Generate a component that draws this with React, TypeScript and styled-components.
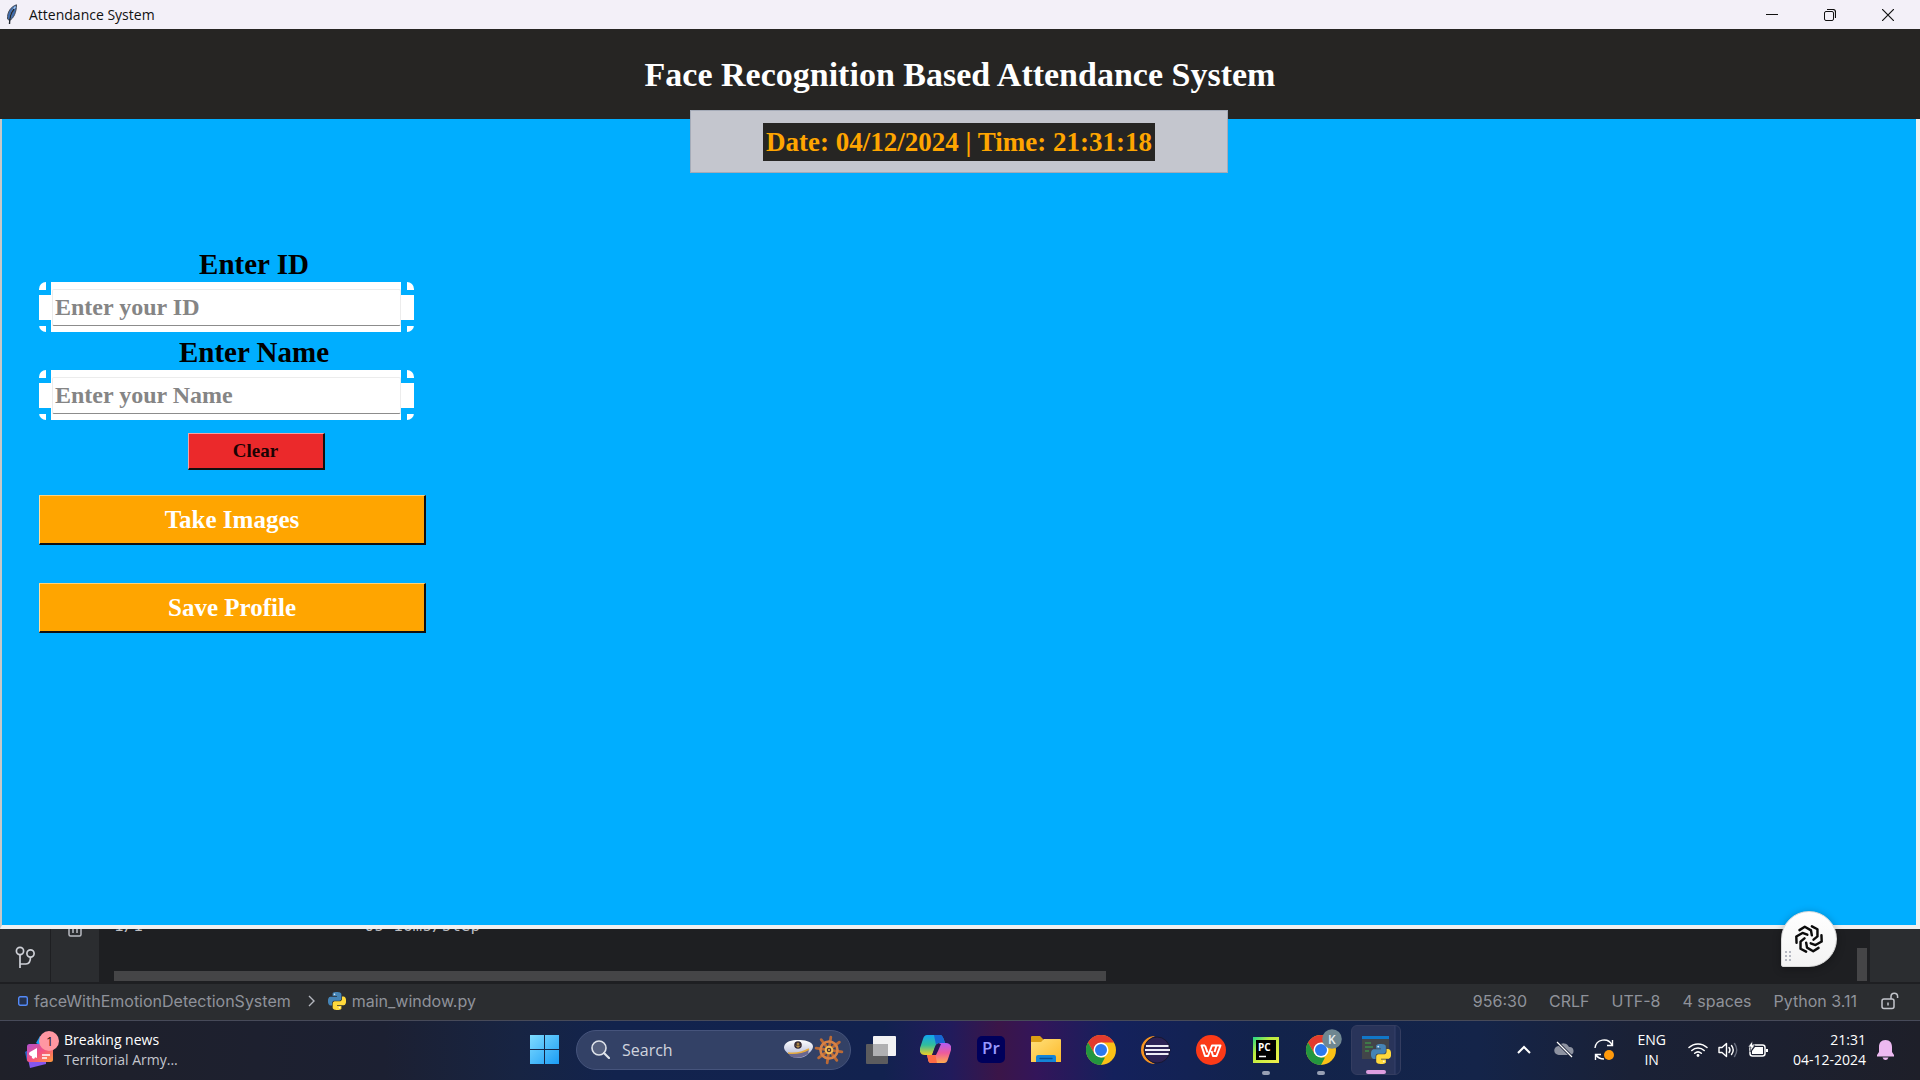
import React from "react";
import styled, { createGlobalStyle, css } from "styled-components";

const serif = '"Liberation Serif", "Times New Roman", serif';
const ui = '"Open Sans", "Noto Sans", sans-serif';
const ide = 'Inter, "Noto Sans", sans-serif';

const GlobalStyle = createGlobalStyle`
  * { box-sizing: border-box; }
  body { margin: 0; background: #1e1f22; }
  button { font: inherit; color: inherit; cursor: pointer; }
`;

const Screen = styled.div`
  min-height: 100vh;
  display: flex;
  flex-direction: column;
  position: relative;
  overflow: hidden;
`;

/* ---------- application window ---------- */

const AppWindow = styled.main`
  flex: 1;
  display: flex;
  flex-direction: column;
`;

const TitleBar = styled.header`
  height: 29px;
  display: flex;
  align-items: center;
  padding-left: 6px;
  gap: 11px;
  background: #f3f0f8;
  color: #111;
  font: 14px/29px ${ui};
`;

const WindowControls = styled.div`
  display: flex;
  margin-left: auto;
  padding-right: 3px;
`;

const WindowControl = styled.button`
  width: 58px;
  height: 29px;
  display: flex;
  align-items: center;
  justify-content: center;
  padding: 0;
  border: 0;
  background: transparent;
`;

const Heading = styled.h1`
  margin: 0;
  height: 90px;
  padding-top: 2px;
  display: flex;
  align-items: center;
  justify-content: center;
  background: #262523;
  color: #fff;
  font: bold 34px/40px ${serif};
`;

const Canvas = styled.section`
  flex: 1;
  background: #00aeff;
  border: solid #f0f0f0;
  border-width: 0 4px 4px 2px;
  border-left-color: #c8c8c8;
`;

const ClockPanel = styled.div`
  width: 538px;
  height: 63px;
  margin: -9px auto 0;
  display: flex;
  align-items: center;
  justify-content: center;
  background: #c4c6ce;
  border: 1px solid #a5abb8;
  position: relative;
`;

const Clock = styled.time`
  padding: 0 3px;
  background: #262523;
  color: #ffa500;
  font: bold 27px/38px ${serif};
`;

const Form = styled.form`
  width: 434px;
  margin: 71px 0 0 37px;
  display: flex;
  flex-direction: column;
  align-items: flex-start;
`;

const FieldLabel = styled.label`
  align-self: stretch;
  padding: 3px 4px 0 0;
  text-align: center;
  color: #000;
  font: bold 29px/35px ${serif};
`;

const paint = "linear-gradient(#fff, #fff)";

const FieldFrame = styled.div`
  width: 375px;
  height: 50px;
  padding: 7px 13px 5px;
  border-radius: 7px;
  background:
    ${paint} 12px 0 / 350px 50px,
    ${paint} 0 13px / 375px 25px,
    ${paint} 0 0 / 7px 8px,
    ${paint} 0 100% / 7px 6px,
    ${paint} 100% 0 / 7px 8px,
    ${paint} 100% 100% / 7px 6px;
  background-repeat: no-repeat;
`;

const Field = styled.input`
  display: block;
  width: 100%;
  height: 37px;
  padding: 0 2px;
  border: 1px solid #ececec;
  border-bottom: 1px solid #8c8c8c;
  border-radius: 2px;
  outline: 0;
  background: #fff;
  font: bold 24px/34px ${serif};
  &::placeholder { color: #858585; opacity: 1; }
`;

const RaisedButton = styled.button<{ $danger?: boolean }>`
  border: 2px solid #101010;
  border-top: 1px solid #ffd27a;
  border-left: 1px solid #ffe0a0;
  padding: 0;
  ${({ $danger }) =>
    $danger
      ? css`
          width: 137px;
          height: 37px;
          margin-top: 13px;
          align-self: center;
          background: #eb292b;
          border-top-color: #f6a3a4;
          border-left-color: #f6a3a4;
          color: #1a0303;
          font: bold 19px/30px ${serif};
        `
      : css`
          width: 387px;
          height: 50px;
          background: #ffa500;
          color: #fff;
          font: bold 25px/44px ${serif};
        `}
`;

const Actions = styled.div`
  display: flex;
  flex-direction: column;
  gap: 38px;
  margin-top: 25px;
`;

/* ---------- editor behind the window ---------- */

const Editor = styled.section`
  height: 55px;
  display: flex;
  padding-bottom: 2px;
  background: #1e1f22;
`;

const Rail = styled.div<{ $narrow?: boolean }>`
  width: ${({ $narrow }) => ($narrow ? "48px" : "50px")};
  margin-left: ${({ $narrow }) => ($narrow ? "1px" : "0")};
  flex: none;
  display: flex;
  justify-content: center;
  background: #2b2d30;
`;

const Console = styled.div`
  flex: 1;
  min-width: 0;
  padding: 0 3px 1px 15px;
  display: flex;
  justify-content: space-between;
  align-items: flex-end;
  overflow: hidden;
`;

const ConsoleBody = styled.div`
  width: calc(57% - 7px);
  height: 100%;
  display: flex;
  flex-direction: column;
  justify-content: space-between;
`;

const Output = styled.pre`
  margin: -13px 0 0;
  color: #bcbec4;
  font: 16px/20px "DejaVu Sans Mono", monospace;
`;

const Thumb = styled.div<{ $vertical?: boolean }>`
  background: #454547;
  width: ${({ $vertical }) => ($vertical ? "10px" : "100%")};
  height: ${({ $vertical }) => ($vertical ? "33px" : "10px")};
`;

const StatusBar = styled.footer`
  height: 36px;
  display: flex;
  align-items: center;
  padding: 0 21px 3px 18px;
  background: #2b2d30;
  color: #8f929a;
  font: 16px/24px ${ide};
`;

const Crumb = styled.span`
  display: flex;
  align-items: center;
  gap: 6px;
`;

const CrumbMark = styled.span`
  display: flex;
  margin: 0 13px 0 17px;
`;

const StatusItems = styled.div`
  margin-left: auto;
  display: flex;
  align-items: center;
  gap: 22px;
`;

const LockSlot = styled.span`
  display: flex;
  padding-left: 2px;
`;

const FloatingButton = styled.button`
  position: absolute;
  right: 83px;
  bottom: 113px;
  width: 56px;
  height: 56px;
  padding: 0;
  display: flex;
  align-items: center;
  justify-content: center;
  border: 1px solid #d9d9d9;
  border-radius: 28px 28px 28px 2px;
  background: linear-gradient(#fff, #f3f3f3);
  box-shadow: 0 2px 8px rgba(0, 0, 0, 0.3);
`;

const Grip = styled.svg`
  position: absolute;
  left: 3px;
  bottom: 4px;
`;

/* ---------- taskbar ---------- */

const Taskbar = styled.nav`
  height: 60px;
  display: grid;
  grid-template-columns: 1fr auto 1fr;
  align-items: center;
  padding-bottom: 2px;
  border-top: 1px solid #474a59;
  color: #fff;
  font: 14px/20px ${ui};
  background: linear-gradient(
    90deg,
    #1f2029 0%, #1c2032 20%, #172443 27%, #12234d 32%, #12224f 46%,
    #211b5c 49.5%, #3b1548 52%, #33155a 54%, #14215c 58%, #12234b 66%,
    #142449 77%, #1a2136 85%, #1e1f29 100%
  );
`;

const Widgets = styled.button`
  justify-self: start;
  display: flex;
  align-items: center;
  gap: 5px;
  margin-left: 24px;
  padding: 0;
  border: 0;
  background: transparent;
  text-align: left;
`;

const Muted = styled.span`
  display: block;
  color: #c4c6cd;
`;

const Apps = styled.div`
  display: flex;
  align-items: center;
`;

const AppButton = styled.button<{ $active?: boolean; $state?: "open" | "focused" }>`
  width: 55px;
  height: 57px;
  padding: 0;
  border: 0;
  background: transparent;
  display: flex;
  align-items: center;
  justify-content: center;
  position: relative;
  ${({ $active }) =>
    $active &&
    css`
      width: 50px;
      height: 50px;
      border: 1px solid #343d60;
      border-radius: 6px;
      background: linear-gradient(90deg, #29345a 42px, #35406a 43px, #1d2b52 44px);
      margin-left: 3px;
      margin-right: 2px;
    `}
  ${({ $state }) =>
    $state &&
    css`
      &::after {
        content: "";
        position: absolute;
        bottom: ${$state === "focused" ? "0" : "3px"};
        left: ${$state === "focused" ? "14px" : "24px"};
        width: ${$state === "focused" ? "20px" : "8px"};
        height: 4px;
        border-radius: 2px;
        background: ${$state === "focused" ? "#dd9ee0" : "#98a0b4"};
      }
    `}
`;

const SearchBox = styled.label`
  width: 275px;
  height: 40px;
  margin: 0 2px 0 4px;
  padding: 0 6px 0 14px;
  display: flex;
  align-items: center;
  border: 1px solid #46547c;
  border-radius: 20px;
  background: #334166;
`;

const SearchInput = styled.input`
  flex: 1;
  min-width: 0;
  margin-left: 12px;
  padding: 0;
  border: 0;
  outline: 0;
  background: transparent;
  color: #fff;
  font: 16px/24px ${ui};
  &::placeholder { color: #d0d4de; opacity: 1; }
`;

const Tray = styled.div`
  justify-self: end;
  display: flex;
  align-items: center;
  padding-right: 26px;
`;

const TrayButton = styled.button`
  padding: 0;
  border: 0;
  background: transparent;
  display: flex;
  align-items: center;
`;

const Chevron = styled(TrayButton)`
  margin-right: 23px;
`;

const Cloud = styled(TrayButton)`
  margin-right: 20px;
`;

const Language = styled(TrayButton)`
  flex-direction: column;
  margin: 0 22px 0 23px;
`;

const Status = styled(TrayButton)`
  gap: 10px;
`;

const DateTime = styled(TrayButton)`
  flex-direction: column;
  align-items: flex-end;
  margin: 0 11px 0 25px;
`;

/* ---------- drawings ---------- */

const Feather = () => (
  <svg width="12" height="21" viewBox="0 0 12 21" aria-hidden="true">
    <path d="M10.500 .8C5 2.500 1 8 1.500 15l2 1.500c4-2 7-8 7-15.700z" fill="#3f6db0" stroke="#474d59" strokeWidth="1" />
    <path d="M9.500 2.500C7 5 5 9 4 15" stroke="#a9cdf2" strokeWidth="1.300" fill="none" />
    <path d="M8 5C5 9 3.500 14 3.500 20" stroke="#222831" strokeWidth="1.400" fill="none" />
  </svg>
);

const PythonMark = ({ size }: { size: number }) => (
  <svg width={size} height={size} viewBox="0 0 24 24" aria-hidden="true">
    <path fill="#4584b6" d="M14.250.180l.9.200.730.260.590.300.450.320.340.340.250.340.160.330.1.300.040.260.020.200-.010.130V8.500l-.050.630-.130.550-.210.460-.260.380-.300.310-.330.250-.350.190-.350.140-.330.100-.300.070-.260.040-.210.020H8.770l-.690.050-.590.140-.500.220-.410.270-.330.320-.270.350-.200.360-.150.370-.100.350-.070.320-.040.270-.020.210v3.060H3.170l-.210-.030-.280-.070-.320-.120-.350-.180-.360-.260-.360-.360-.350-.460-.320-.590-.280-.730-.210-.880-.140-1.050-.050-1.230.060-1.220.160-1.040.240-.870.320-.710.360-.570.400-.440.420-.330.420-.240.400-.160.360-.100.320-.050.240-.010h.160l.060.010h8.160v-.830H6.180l-.010-2.750-.020-.370.050-.340.110-.310.170-.280.250-.260.310-.230.380-.200.440-.180.510-.150.580-.120.640-.100.710-.060.770-.040.840-.020 1.270.050z" />
    <circle cx="8.700" cy="3.100" r="1.100" fill="#dcebf7" />
    <path fill="#ffd93b" d="M21.100 6.110l.280.060.320.120.350.180.360.270.360.350.350.470.320.590.280.730.210.880.140 1.040.050 1.230-.060 1.230-.160 1.040-.240.860-.320.710-.360.570-.400.450-.420.330-.420.240-.400.160-.360.090-.320.050-.240.020-.160-.010h-8.220v.820h5.840l.010 2.760.020.360-.050.340-.110.310-.170.290-.250.250-.310.240-.380.200-.440.170-.510.150-.580.130-.640.090-.710.070-.770.040-.840.010-1.270-.040-1.070-.140-.900-.200-.730-.250-.590-.300-.450-.330-.340-.340-.250-.340-.160-.330-.100-.300-.040-.250-.020-.200.010-.130v-5.340l.050-.640.130-.540.210-.460.260-.380.300-.320.330-.240.350-.200.350-.140.330-.100.300-.060.260-.040.210-.020.130-.010h5.840l.690-.050.590-.140.500-.210.410-.280.330-.320.270-.350.200-.360.150-.360.100-.350.070-.320.040-.280.020-.210V6.070h2.090l.140.010z" />
    <circle cx="15.300" cy="20.900" r="1.100" fill="#fff6cf" />
  </svg>
);

const arm = "M9 -39L26 -30L26 -8L14 2";
const Swirl = () => (
  <svg width="28" height="28" viewBox="-43 -43 86 86" aria-hidden="true">
    {[0, 60, 120, 180, 240, 300].map((a) => (
      <path key={a} d={arm} transform={`rotate(${a})`} fill="none" stroke="#0b0b0b" strokeWidth="7.500" strokeLinecap="round" strokeLinejoin="round" />
    ))}
  </svg>
);

const NewsIcon = () => (
  <svg width="35" height="38" viewBox="0 0 35 38" aria-hidden="true">
    <defs>
      <linearGradient id="news" x1="0" y1="0" x2="1" y2="1">
        <stop offset="0" stopColor="#b04fd0" />
        <stop offset=".5" stopColor="#f4527f" />
        <stop offset="1" stopColor="#ff9a3a" />
      </linearGradient>
    </defs>
    <path d="M12 12l4-7 12 4v12z" fill="#1aa0f2" />
    <path d="M1 21l5-3v12H3z" fill="#2a63c8" />
    <path d="M4 28l18 2v3L6 37z" fill="#8456ee" />
    <rect x="3" y="13" width="26" height="18" rx="2.500" fill="url(#news)" />
    <path d="M5 22.500q0-1 1-1.500l7-4v10l-2-.8q-.5 2.300-2.300 1.300-1.200-.6-.9-2.300L6 24.500q-1-.5-1-2z" fill="#fff" />
    <path d="M18 24h8M18 27h5" stroke="#fff" strokeWidth="1.500" />
    <circle cx="25" cy="10" r="10" fill="#ff97a2" />
    <text x="22" y="15" fontFamily="Open Sans" fontSize="13" fill="#221114">1</text>
  </svg>
);

const StartIcon = () => (
  <svg width="29" height="29" viewBox="0 0 29 29" aria-hidden="true">
    <defs>
      <linearGradient id="win" x1="0" y1="0" x2="1" y2="1">
        <stop offset="0" stopColor="#7fdcff" />
        <stop offset="1" stopColor="#1b9cf5" />
      </linearGradient>
    </defs>
    <path d="M0 0h14v14H0zM15 0h14v14H15zM0 15h14v14H0zM15 15h14v14H15z" fill="url(#win)" />
  </svg>
);

const SearchIcon = () => (
  <svg width="19" height="19" viewBox="0 0 19 19" fill="none" stroke="#dfe3ea" aria-hidden="true">
    <circle cx="8" cy="8" r="7" strokeWidth="1.600" fill="#56617f" />
    <path d="M13 13l5 5" strokeWidth="2.200" strokeLinecap="round" />
  </svg>
);

const NavalIcon = () => (
  <svg width="61" height="30" viewBox="0 0 61 30" aria-hidden="true">
    <defs>
      <linearGradient id="cap" x1="0" y1="0" x2="0" y2="1">
        <stop offset="0" stopColor="#fff" />
        <stop offset="1" stopColor="#aab0d2" />
      </linearGradient>
    </defs>
    <path d="M1 12C2 6 9 5 15 5s14 1 15 6c0 4-3 6-5 8-4 5-15 5-18 1C5 18 1 16 1 12z" fill="url(#cap)" />
    <path d="M5 18c8 1 14 0 21-4l-1 5c-5 4-14 5-18 2z" fill="#6a678f" />
    <path d="M5 18c8 1 14 0 21-4" fill="none" stroke="#e6aa3e" strokeWidth="1.500" />
    <circle cx="15" cy="10" r="3.800" fill="#352a35" />
    <path d="M15 7.500v5M13 10.500c.5 2 3.500 2 4 0M13.500 9h3" stroke="#e7b54c" fill="none" strokeWidth=".8" />
    <g transform="translate(46 15)" stroke="#ba6a36" fill="none">
      {[0, 45, 90, 135, 180, 225, 270, 315].map((a) => (
        <path key={a} d="M0-3v-10" strokeWidth="2.800" strokeLinecap="round" transform={`rotate(${a + 8})`} />
      ))}
      <circle r="8.500" strokeWidth="2.600" stroke="#d78245" />
      <circle r="3.300" strokeWidth="2" fill="#473238" stroke="#f0bb57" />
      <circle r="1" fill="#f0bb57" stroke="none" />
    </g>
  </svg>
);

const TaskViewIcon = () => (
  <svg width="30" height="28" viewBox="0 0 30 28" aria-hidden="true">
    <rect y="8" width="22" height="20" rx="1" fill="#5c5c5e" />
    <rect x="7" width="23" height="20" rx="1" fill="#f2f2f3" />
    <path d="M7 8h15v12H7z" fill="#b0b0b2" />
  </svg>
);

const CopilotIcon = () => (
  <svg width="31" height="29" viewBox="0 0 31 29" aria-hidden="true">
    <defs>
      <linearGradient id="cpA" x1="0" y1="0" x2="0" y2="1">
        <stop offset="0" stopColor="#12a5ef" /><stop offset=".5" stopColor="#31bd9c" /><stop offset="1" stopColor="#f3cf24" />
      </linearGradient>
      <linearGradient id="cpB" x1="0" y1="0" x2="0" y2="1">
        <stop offset="0" stopColor="#b05cf5" /><stop offset=".5" stopColor="#ee5b9b" /><stop offset="1" stopColor="#ffac50" />
      </linearGradient>
    </defs>
    <path d="M7 0h13c2 0 3 2 4 5l1 3h-5c-3 0-4 1-5 4l-2 6c-1 3-2 2-4 2H5c-4 0-6-3-5-7L3 4C4 1 5 0 7 0z" fill="url(#cpA)" />
    <path d="M14 0h6c2 0 3 2 4 5l1 3h-5c-2 0-3 0-4 2z" fill="#1765d3" />
    <path d="M24 28H11c-2 0-3-2-3-4l-1-4h4c3 0 4-1 5-4l2-5c1-3 2-3 4-3h4c4 0 6 3 5 7l-3 9c-1 3-2 4-4 4z" fill="url(#cpB)" />
    <path d="M17 28h-6c-2 0-3-2-3-4l-1-4h5c1 0 2-1 3-2z" fill="#ff6b45" />
    <path d="M15 12l2-3h4l-3 7-2 4h-4z" fill="#261752" />
  </svg>
);

const PremiereIcon = () => (
  <svg width="28" height="27" viewBox="0 0 28 27" aria-hidden="true">
    <rect width="28" height="27" rx="5" fill="#00005b" />
    <text x="5" y="18" fontFamily="Open Sans" fontWeight="600" fontSize="17" fill="#9999ff">Pr</text>
  </svg>
);

const FolderIcon = () => (
  <svg width="30" height="27" viewBox="0 0 30 27" aria-hidden="true">
    <defs>
      <linearGradient id="fold" x1="0" y1="0" x2="1" y2="1">
        <stop offset="0" stopColor="#ffe07a" /><stop offset="1" stopColor="#fdb92a" />
      </linearGradient>
    </defs>
    <path d="M0 1q0-1 1-1h8l4 4h16v10H0z" fill="#dc9e14" />
    <path d="M0 6h10l3-3h16q1 0 1 1v22H0z" fill="url(#fold)" />
    <path d="M5 26v-5q0-2 2-2h16q2 0 2 2v5z" fill="#1484d8" />
    <path d="M9 22.500h12" stroke="#0a4f94" strokeWidth="1.400" strokeLinecap="round" />
  </svg>
);

const ChromeMark = () => (
  <>
    <circle cx="15" cy="15" r="15" fill="#fbc116" />
    <path d="M2 7.500A15 15 0 0 1 28 7.500H15l-6.500 11.200z" fill="#e33b2e" />
    <path d="M2 7.500l6.500 11.200L15 22.500h4L15 30A15 15 0 0 1 2 7.500z" fill="#23963f" />
    <circle cx="15" cy="15" r="7.500" fill="#fff" />
    <circle cx="15" cy="15" r="6" fill="#2c78ee" />
  </>
);

const ChromeIcon = () => (
  <svg width="30" height="30" viewBox="0 0 30 30" aria-hidden="true"><ChromeMark /></svg>
);

const ChromeProfileIcon = () => (
  <svg width="42" height="42" viewBox="-6 -6 42 42" aria-hidden="true">
    <ChromeMark />
    <circle cx="26" cy="4" r="9.800" fill="#6f8791" />
    <text x="22" y="9" fontFamily="Open Sans" fontWeight="600" fontSize="12" fill="#e8eef0">K</text>
  </svg>
);

const EclipseIcon = () => (
  <svg width="30" height="28" viewBox="0 0 30 28" aria-hidden="true">
    <path d="M14 0a14 14 0 0 0 0 28C7 24 4 20 4 14S7 4 14 0z" fill="#f79420" />
    <circle cx="16" cy="14" r="13" fill="#2c2255" stroke="#181731" strokeWidth="1" />
    <path d="M5 10h22.500M4 14h25M5 18h22.500" stroke="#edebf5" strokeWidth="2" />
  </svg>
);

const WpsIcon = () => (
  <svg width="30" height="30" viewBox="0 0 30 30" aria-hidden="true">
    <circle cx="15" cy="15" r="15" fill="#fb3a18" />
    <path d="M9 10.500H5.500L9 21h3l4-10.500h8.500L20.500 21H17l-1.500-5M9 10.500l2.500 7M20.500 10.500L18.500 17" fill="none" stroke="#fff" strokeWidth="2" strokeLinejoin="round" />
  </svg>
);

const PyCharmIcon = () => (
  <svg width="26" height="26" viewBox="0 0 26 26" aria-hidden="true">
    <defs>
      <linearGradient id="pc" x1="0" y1="0" x2="1" y2="1">
        <stop offset="0" stopColor="#22d789" /><stop offset=".35" stopColor="#b9ec3f" /><stop offset="1" stopColor="#f3ef4b" />
      </linearGradient>
    </defs>
    <rect width="26" height="26" fill="url(#pc)" />
    <rect x="3" y="3" width="20" height="20" fill="#000" />
    <text x="5" y="14" fontFamily="Open Sans" fontWeight="700" fontSize="10" fill="#fff">PC</text>
    <path d="M6 19.500h7" stroke="#fff" strokeWidth="1.500" />
  </svg>
);

const PythonWindowIcon = () => (
  <svg width="30" height="30" viewBox="0 0 30 30" aria-hidden="true">
    <rect x="1" y="1" width="27" height="23" fill="#424549" />
    <rect x="1" y="1" width="27" height="3" fill="#1177c8" />
    <path d="M4 8h6M4 12h8M4 16h4" stroke="#3f8b4a" strokeWidth="1.300" />
    <g transform="translate(10 9)"><PythonMark size={20} /></g>
  </svg>
);

const BranchIcon = () => (
  <svg width="22" height="53" viewBox="0 0 22 53" fill="none" stroke="#ced0d6" strokeWidth="1.700" aria-hidden="true">
    <circle cx="6" cy="22" r="3.600" />
    <circle cx="16.500" cy="24.500" r="3.600" />
    <path d="M6 25.500V39M6 35h6c3 0 4.500-3 4.500-7" />
  </svg>
);

const TrashIcon = () => (
  <svg width="14" height="12" viewBox="0 0 14 12" fill="none" stroke="#b9bbc1" strokeWidth="1.500" aria-hidden="true">
    <path d="M1 -2V5.500Q1 7 2.500 7h9Q13 7 13 5.500V-2M5 -2v6M9 -2v6" />
  </svg>
);

const LockIcon = () => (
  <svg width="18" height="18" viewBox="0 0 18 18" fill="none" stroke="#c3c5cb" strokeWidth="1.500" aria-hidden="true">
    <rect x="1" y="7" width="12" height="9.500" rx="2" />
    <path d="M10 7V4.500a3.300 3.300 0 0 1 6.600 0V6M7 10.500v3" />
  </svg>
);

const CloudIcon = () => (
  <svg width="20" height="18" viewBox="0 0 20 18" aria-hidden="true">
    <path d="M5 14a4.500 4.500 0 0 1-.5-9A6 6 0 0 1 15 6a4 4 0 0 1 1 8z" fill="#8d92a0" />
    <path d="M3 1l15 15" stroke="#1a2138" strokeWidth="3" />
    <path d="M3 1l15 15" stroke="#fff" strokeWidth="1.300" />
  </svg>
);

const SyncIcon = () => (
  <svg width="20" height="22" viewBox="0 0 20 22" fill="none" stroke="#fff" strokeWidth="1.400" aria-hidden="true">
    <path d="M1 9a9 9 0 0 1 17-3M18.500 1v5.500H13M1.500 21v-5.500H7M2 16c2 3 5 4 8 4" />
    <circle cx="15" cy="16" r="5" fill="#ff9a0c" stroke="none" />
  </svg>
);

const WifiIcon = () => (
  <svg width="20" height="16" viewBox="0 0 20 16" fill="none" stroke="#fff" strokeWidth="1.500" strokeLinecap="round" aria-hidden="true">
    <path d="M1 5.500a13 13 0 0 1 18 0M3.800 8.500a9 9 0 0 1 12.400 0M6.700 11.300a5 5 0 0 1 6.600 0" />
    <circle cx="10" cy="13.500" r="1.400" fill="#fff" stroke="none" />
  </svg>
);

const SpeakerIcon = () => (
  <svg width="20" height="16" viewBox="0 0 20 16" fill="none" stroke="#fff" strokeWidth="1.400" strokeLinejoin="round" strokeLinecap="round" aria-hidden="true">
    <path d="M1 5.500h3L8.500 1.500v13L4 10.500H1zM11 5.500q2 2.500 0 5M13.500 3.500q3.500 4.500 0 9" />
    <path d="M16.500 1.500q4.500 6.500 0 13" stroke="#666b7b" />
  </svg>
);

const BatteryIcon = () => (
  <svg width="20" height="17" viewBox="0 0 20 17" aria-hidden="true">
    <rect x="2" y="4" width="15" height="11" rx="2.500" fill="none" stroke="#fff" strokeWidth="1.500" />
    <path d="M7 6h8v7H4v-3zM18 8h2v3h-2z" fill="#fff" />
    <path d="M4.500 0L0 6h3l-1 5 5-7H4.500z" fill="#fff" stroke="#1d2132" strokeWidth=".6" />
  </svg>
);

const BellIcon = () => (
  <svg width="17" height="20" viewBox="0 0 17 20" fill="#edb9f0" aria-hidden="true">
    <path d="M8.500 0C4 0 2 3 2 7v5l-2 3v1.500h17V15l-2-3V7c0-4-2-7-6.500-7zM5.500 17.500h6q-1 2.500-3 2.500t-3-2.500z" />
  </svg>
);

const taskbarApps: { name: string; icon: React.ReactNode; state?: "open" | "focused" }[] = [
  { name: "Task view", icon: <TaskViewIcon /> },
  { name: "Copilot", icon: <CopilotIcon /> },
  { name: "Premiere Pro", icon: <PremiereIcon /> },
  { name: "File Explorer", icon: <FolderIcon /> },
  { name: "Chrome", icon: <ChromeIcon /> },
  { name: "Eclipse", icon: <EclipseIcon /> },
  { name: "WPS Office", icon: <WpsIcon /> },
  { name: "PyCharm", icon: <PyCharmIcon />, state: "open" },
  { name: "Chrome profile K", icon: <ChromeProfileIcon />, state: "open" },
  { name: "Attendance System", icon: <PythonWindowIcon />, state: "focused" },
];

const bar = " ".repeat(23);

export default function App() {
  return (
    <Screen>
      <GlobalStyle />
      <AppWindow>
        <TitleBar>
          <Feather />
          <span>Attendance System</span>
          <WindowControls>
            <WindowControl aria-label="Minimize">
              <svg width="12" height="12" viewBox="0 0 12 12" stroke="#111"><path d="M0 5.500h12" /></svg>
            </WindowControl>
            <WindowControl aria-label="Restore">
              <svg width="12" height="12" viewBox="0 0 12 12" fill="none" stroke="#111">
                <rect x=".5" y="2.500" width="9" height="9" rx="1.500" />
                <path d="M3 .5h6q2.500 0 2.500 2.500v6" strokeWidth="1.200" />
              </svg>
            </WindowControl>
            <WindowControl aria-label="Close">
              <svg width="12" height="12" viewBox="0 0 12 12" stroke="#111" strokeWidth="1.200"><path d="M0 0l12 12M12 0L0 12" /></svg>
            </WindowControl>
          </WindowControls>
        </TitleBar>
        <Heading>Face Recognition Based Attendance System</Heading>
        <Canvas>
          <ClockPanel>
            <Clock>Date: 04/12/2024 | Time: 21:31:18</Clock>
          </ClockPanel>
          <Form onSubmit={(e) => e.preventDefault()}>
            <FieldLabel htmlFor="person-id">Enter ID</FieldLabel>
            <FieldFrame>
              <Field id="person-id" placeholder="Enter your ID" />
            </FieldFrame>
            <FieldLabel htmlFor="person-name">Enter Name</FieldLabel>
            <FieldFrame>
              <Field id="person-name" placeholder="Enter your Name" />
            </FieldFrame>
            <RaisedButton type="reset" $danger>Clear</RaisedButton>
            <Actions>
              <RaisedButton type="button">Take Images</RaisedButton>
              <RaisedButton type="submit">Save Profile</RaisedButton>
            </Actions>
          </Form>
        </Canvas>
      </AppWindow>

      <Editor>
        <Rail><BranchIcon /></Rail>
        <Rail $narrow><TrashIcon /></Rail>
        <Console>
          <ConsoleBody>
            <Output>{`1/1${bar}0s 16ms/step`}</Output>
            <Thumb />
          </ConsoleBody>
          <Thumb $vertical />
        </Console>
        <Rail />
      </Editor>

      <StatusBar>
        <Crumb>
          <svg width="10" height="10" viewBox="0 0 10 10" aria-hidden="true">
            <rect x=".7" y=".7" width="8.600" height="8.600" rx="1.500" fill="#25324d" stroke="#548af7" strokeWidth="1.400" />
          </svg>
          faceWithEmotionDetectionSystem
        </Crumb>
        <CrumbMark>
          <svg width="7" height="12" viewBox="0 0 7 12" fill="none" stroke="#b4b7be" strokeWidth="1.400" aria-hidden="true"><path d="M1 1l5 5-5 5" /></svg>
        </CrumbMark>
        <Crumb>
          <PythonMark size={18} />
          main_window.py
        </Crumb>
        <StatusItems>
          <span>956:30</span>
          <span>CRLF</span>
          <span>UTF-8</span>
          <span>4 spaces</span>
          <span>Python 3.11</span>
          <LockSlot><LockIcon /></LockSlot>
        </StatusItems>
      </StatusBar>

      <Taskbar>
        <Widgets>
          <NewsIcon />
          <span>
            Breaking news
            <Muted>Territorial Army...</Muted>
          </span>
        </Widgets>
        <Apps>
          <AppButton aria-label="Start"><StartIcon /></AppButton>
          <SearchBox>
            <SearchIcon />
            <SearchInput type="text" placeholder="Search" aria-label="Search" />
            <NavalIcon />
          </SearchBox>
          {taskbarApps.map((app) => (
            <AppButton key={app.name} aria-label={app.name} $active={app.state === "focused"} $state={app.state}>
              {app.icon}
            </AppButton>
          ))}
        </Apps>
        <Tray>
          <Chevron aria-label="Show hidden icons">
            <svg width="14" height="9" viewBox="0 0 14 9" fill="none" stroke="#fff" strokeWidth="2" aria-hidden="true"><path d="M1 8l6-6 6 6" /></svg>
          </Chevron>
          <Cloud aria-label="Cloud storage"><CloudIcon /></Cloud>
          <TrayButton aria-label="Updates"><SyncIcon /></TrayButton>
          <Language>
            <span>ENG</span>
            <span>IN</span>
          </Language>
          <Status aria-label="Network, sound and battery">
            <WifiIcon />
            <SpeakerIcon />
            <BatteryIcon />
          </Status>
          <DateTime>
            <span>21:31</span>
            <span>04-12-2024</span>
          </DateTime>
          <TrayButton aria-label="Notifications"><BellIcon /></TrayButton>
        </Tray>
      </Taskbar>

      <FloatingButton aria-label="Assistant">
        <Swirl />
        <Grip width="7" height="11" viewBox="0 0 7 11" fill="#b5b8c2" aria-hidden="true">
          <path d="M0 0h2v2H0zM4 0h2v2H4zM0 4h2v2H0zM4 4h2v2H4zM0 8h2v2H0zM4 8h2v2H4z" />
        </Grip>
      </FloatingButton>
    </Screen>
  );
}
